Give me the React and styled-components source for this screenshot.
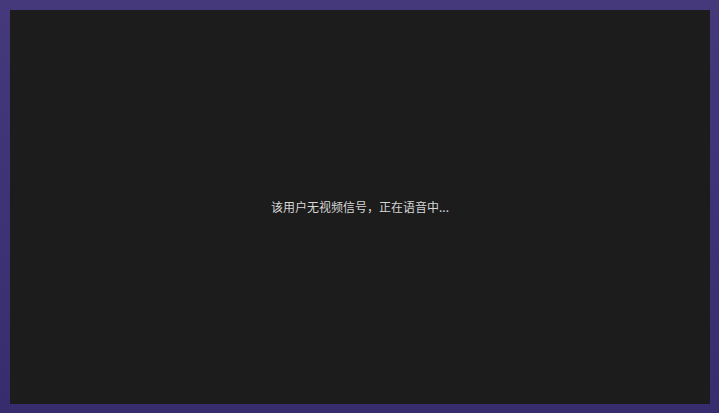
import React from 'react'
import styled, { createGlobalStyle } from 'styled-components'

const GlobalStyle = createGlobalStyle`
  html, body {
    margin: 0;
    padding: 0;
    height: 100%;
  }
  body {
    font-family: "Noto Sans CJK SC", "Noto Sans", sans-serif;
  }
  #root {
    height: 100%;
  }
`

const Stage = styled.div`
  box-sizing: border-box;
  width: 719px;
  height: 413px;
  padding: 10px 9px 9px 10px;
  background: linear-gradient(180deg, #45397c 0%, #3c3275 55%, #372d6e 100%);
  display: flex;
`

const VideoPanel = styled.div`
  flex: 1;
  background: #1c1c1c;
  display: flex;
  align-items: center;
  justify-content: center;
`

const Notice = styled.span`
  color: #d6d6d6;
  font-size: 12px;
  line-height: 16px;
`

const App = () => {
  return (
    <>
      <GlobalStyle />
      <Stage>
        <VideoPanel>
          <Notice>该用户无视频信号，正在语音中...</Notice>
        </VideoPanel>
      </Stage>
    </>
  )
}

export default App
